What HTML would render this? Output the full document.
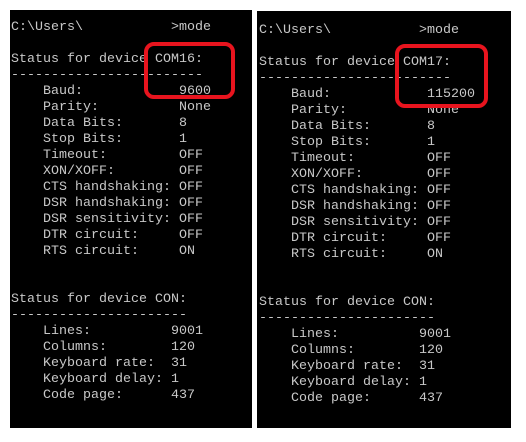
<!DOCTYPE html>
<html><head><style>
html,body{margin:0;padding:0;background:#fff;width:526px;height:442px;overflow:hidden}
.p{position:absolute;background:#000;color:#c8c8c8;font-family:"Liberation Mono",monospace;font-size:13.33px;line-height:16px;white-space:pre;overflow:hidden}
.box{position:absolute;border:4px solid #e8141e;border-radius:10px;box-sizing:border-box}
</style></head><body>
<div class="p" style="left:10px;top:10px;width:242px;height:418px;padding:10px 0 0 1px;box-sizing:border-box">C:\Users\           &gt;mode

Status for device COM16:
------------------------
    Baud:            9600
    Parity:          None
    Data Bits:       8
    Stop Bits:       1
    Timeout:         OFF
    XON/XOFF:        OFF
    CTS handshaking: OFF
    DSR handshaking: OFF
    DSR sensitivity: OFF
    DTR circuit:     OFF
    RTS circuit:     ON


Status for device CON:
----------------------
    Lines:          9001
    Columns:        120
    Keyboard rate:  31
    Keyboard delay: 1
    Code page:      437</div>
<div class="p" style="left:257px;top:11px;width:254px;height:417px;padding:12px 0 0 2px;box-sizing:border-box">C:\Users\           &gt;mode

Status for device COM17:
------------------------
    Baud:            115200
    Parity:          None
    Data Bits:       8
    Stop Bits:       1
    Timeout:         OFF
    XON/XOFF:        OFF
    CTS handshaking: OFF
    DSR handshaking: OFF
    DSR sensitivity: OFF
    DTR circuit:     OFF
    RTS circuit:     ON


Status for device CON:
----------------------
    Lines:          9001
    Columns:        120
    Keyboard rate:  31
    Keyboard delay: 1
    Code page:      437</div>
<div class="box" style="left:144px;top:42px;width:91px;height:57px"></div>
<div class="box" style="left:395px;top:44px;width:93px;height:64px"></div>
</body></html>
